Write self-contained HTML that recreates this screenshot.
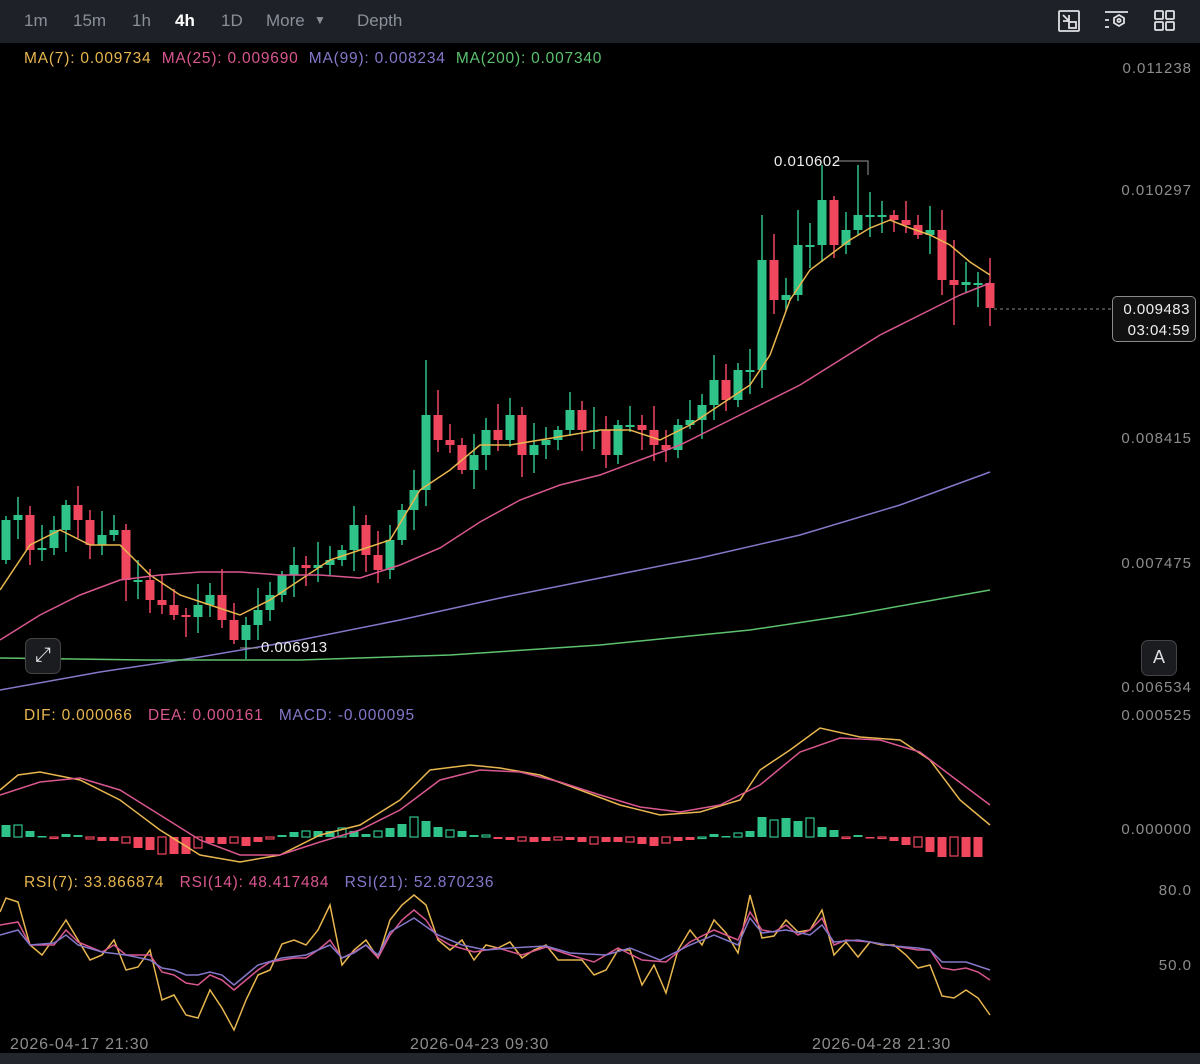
<!DOCTYPE html>
<html><head><meta charset="utf-8"><style>
html,body{margin:0;padding:0;background:#000;width:1200px;height:1064px;overflow:hidden;font-family:"Liberation Sans",sans-serif}
.top{position:absolute;left:0;top:0;width:1200px;height:43px;background:#1e2128}
.top span{position:absolute;top:11px;font-size:17px;color:#8a8f98}
.lab{position:absolute;font-size:15.5px;letter-spacing:0.8px;white-space:pre}
.ax{position:absolute;right:8px;font-size:15px;letter-spacing:1px;color:#8d8d8d}
svg{position:absolute;left:0;top:0}
</style></head><body>
<div class="top">
<span style="left:24px">1m</span><span style="left:73px">15m</span><span style="left:132px">1h</span>
<span style="left:175px;color:#fff;font-weight:bold">4h</span><span style="left:221px">1D</span>
<span style="left:266px">More</span><span style="left:314px;top:13px;font-size:12px">▼</span><span style="left:357px">Depth</span>
<svg width="1200" height="43" style="position:absolute;left:0;top:0" fill="none" stroke="#dfe1e5" stroke-width="1.8">
<rect x="1059" y="11" width="20" height="20" rx="1"/><path d="M1063 15l6 6M1063 21h6v-6" /><rect x="1069" y="22" width="7" height="6"/>
<path d="M1105 12h23M1105 20h4M1105 27h4"/><path d="M1119 15l5 3v5l-5 3-5-3v-5z"/><circle cx="1119" cy="20.5" r="1.6"/>
<rect x="1155" y="11" width="8" height="8" rx="1"/><rect x="1166" y="11" width="8" height="8" rx="1"/><rect x="1155" y="22" width="8" height="8" rx="1"/><rect x="1166" y="22" width="8" height="8" rx="1"/>
</svg>
</div>
<svg id="c" width="1200" height="1064"></svg>
<div class="lab" style="left:24px;top:50px"><span style="color:#e8b64e">MA(7): 0.009734</span>  <span style="color:#d9578f">MA(25): 0.009690</span>  <span style="color:#8577c9">MA(99): 0.008234</span>  <span style="color:#5cc26f">MA(200): 0.007340</span></div>
<div class="lab" style="left:24px;top:707px"><span style="color:#e8b64e">DIF: 0.000066</span>   <span style="color:#d9578f">DEA: 0.000161</span>   <span style="color:#8577c9">MACD: -0.000095</span></div>
<div class="lab" style="left:24px;top:874px"><span style="color:#e8b64e">RSI(7): 33.866874</span>   <span style="color:#d9578f">RSI(14): 48.417484</span>   <span style="color:#8577c9">RSI(21): 52.870236</span></div>
<div class="ax" style="top:60px">0.011238</div>
<div class="ax" style="top:182px">0.010297</div>
<div class="ax" style="top:430px">0.008415</div>
<div class="ax" style="top:555px">0.007475</div>
<div class="ax" style="top:679px">0.006534</div>
<div class="ax" style="top:707px">0.000525</div>
<div class="ax" style="top:821px">0.000000</div>
<div class="ax" style="top:882px">80.0</div>
<div class="ax" style="top:957px">50.0</div>
<div style="position:absolute;left:1112px;top:296px;width:84px;height:46px;border:1px solid #8a8a8a;border-radius:5px;background:#111;color:#eee;font-size:15px;letter-spacing:0.5px;text-align:right;line-height:21px;box-sizing:border-box;padding:2px 5px">0.009483<br>03:04:59</div>
<div style="position:absolute;left:774px;top:153px;color:#eee;font-size:15px;letter-spacing:0.5px">0.010602</div>
<div style="position:absolute;left:261px;top:639px;color:#eee;font-size:15px;letter-spacing:0.5px">0.006913</div>
<div style="position:absolute;left:25px;top:638px;width:34px;height:34px;border:1px solid #444;border-radius:7px;background:#1a1c20;color:#ddd;font-size:20px;text-align:center;line-height:32px">⤢</div>
<div style="position:absolute;left:1141px;top:640px;width:34px;height:34px;border:1px solid #444;border-radius:7px;background:#1a1c20;color:#ddd;font-size:18px;text-align:center;line-height:33px">A</div>
<div class="lab" style="left:10px;top:1036px;color:#8d8d8d;font-size:16px">2026-04-17 21:30</div>
<div class="lab" style="left:410px;top:1036px;color:#8d8d8d;font-size:16px">2026-04-23 09:30</div>
<div class="lab" style="left:812px;top:1036px;color:#8d8d8d;font-size:16px">2026-04-28 21:30</div>
<div style="position:absolute;left:0;top:1053px;width:1200px;height:11px;background:#23262c"></div>
<script>
var s='',G='#2fc38a',R='#f0475f';
var cl=[520,515,550,548,530,505,520,545,535,530,580,580,600,605,615,617,605,595,620,640,625,610,595,575,565,568,565,560,550,525,555,570,540,510,490,415,440,445,470,455,430,440,415,455,445,440,430,410,430,430,455,425,425,430,445,450,425,420,405,380,400,370,370,260,300,295,245,245,200,245,230,215,215,215,220,225,235,230,280,285,282,283,308];
for(var i=0;i<cl.length;i++){var x=6+i*12,c=cl[i],o=(i==0?560:cl[i-1]);if(Math.abs(c-o)<2)o=c+2;
var col=c<o?G:R,t=Math.min(c,o),b=Math.max(c,o),h=4+((i*37)%23),l=4+((i*53)%19);
if(i==35)h=55;if(i==68)h=35;if(i==71)h=50;if(i==79)h=40;if(i==66)h=35;if(i==63)h=45;if(i==78)h=20;if(i==79)l=40;
s+='<line x1="'+x+'" x2="'+x+'" y1="'+(t-h)+'" y2="'+(b+l)+'" stroke="'+col+'" stroke-width="1.5"/><rect x="'+(x-4.5)+'" y="'+t+'" width="9" height="'+(b-t)+'" fill="'+col+'"/>';}
function pl(p,c,w){s+='<polyline fill="none" stroke="'+c+'" stroke-width="'+(w||1.5)+'" points="'+p+'"/>';}
pl('0,590 30,545 60,530 90,545 120,545 150,575 180,595 210,605 240,615 270,600 300,580 330,560 360,550 390,540 420,490 450,470 480,445 510,445 540,440 570,435 600,430 630,430 660,440 690,425 720,405 750,385 770,355 790,300 810,270 830,255 850,240 870,228 890,220 910,228 930,235 950,245 970,262 990,275','#e8b64e');
pl('0,640 40,615 80,595 120,580 160,575 200,572 240,572 280,575 320,575 360,578 400,565 440,548 480,522 520,500 560,485 600,475 640,460 680,445 720,425 760,405 800,385 840,360 880,335 920,315 960,295 990,283','#d9578f');
pl('0,690 100,672 200,657 300,640 400,620 500,598 600,578 700,558 800,535 900,505 990,472','#8577c9');
pl('0,658 150,660 300,660 450,655 600,645 750,630 850,615 990,590','#5cc26f');
s+='<line x1="994" x2="1112" y1="309" y2="309" stroke="#888" stroke-dasharray="3,3"/>';
s+='<polyline points="835,161 868,161 868,175" fill="none" stroke="#999"/><polyline points="240,648 258,648" fill="none" stroke="#999"/>';
var hv=[12,12,6,1,-1,3,2,-2,-4,-4,-6,-11,-13,-17,-17,-17,-11,-6,-7,-6,-9,-5,-2,2,5,6,6,6,9,6,3,6,9,13,20,16,10,7,6,2,2,-2,-3,-4,-5,-4,-3,-3,-5,-7,-5,-5,-5,-7,-9,-6,-4,-3,0,3,1,4,6,20,17,19,16,19,10,7,-1,2,-1,-1,-4,-8,-10,-15,-20,-19,-20,-20];
for(i=0;i<hv.length;i++){var x=6+i*12,v=hv[i],col=v>=0?G:R,hol=(i%3==1);
var y=v>=0?837-v:837,hh=Math.max(Math.abs(v),1.5);
s+=hol?'<rect x="'+(x-4)+'" y="'+y+'" width="8" height="'+hh+'" fill="none" stroke="'+col+'" stroke-width="1.2"/>':'<rect x="'+(x-4.5)+'" y="'+y+'" width="9" height="'+hh+'" fill="'+col+'"/>';}
pl('0,790 18,775 40,772 80,780 120,800 160,830 200,855 240,862 280,855 320,835 360,825 400,800 430,770 470,765 500,768 540,775 580,790 620,805 660,815 700,812 740,800 760,770 790,750 820,728 860,737 900,740 930,760 960,800 990,825','#e8b64e');
pl('0,795 40,782 80,778 120,790 160,815 200,840 240,855 280,855 320,842 360,830 400,810 440,780 480,770 520,772 560,782 600,795 640,807 680,812 720,805 760,785 800,752 840,738 880,740 920,752 950,775 990,805','#d9578f');
pl('0,912 6,898 18,902 30,945 42,955 54,938 66,920 78,940 90,960 102,955 114,940 126,970 138,967 150,950 162,1000 174,995 186,1015 198,1018 210,990 222,1008 234,1030 246,1000 258,975 270,970 282,944 294,940 306,945 318,930 330,905 342,965 354,950 366,940 378,958 390,920 402,905 414,895 426,905 438,940 450,950 462,940 474,960 486,945 498,948 510,942 522,958 534,950 546,945 558,960 570,960 582,960 594,975 606,970 618,950 630,950 642,985 654,965 666,993 678,950 690,930 702,945 714,920 726,933 738,953 750,895 762,938 774,936 786,920 798,932 810,930 822,910 834,955 846,942 858,957 870,942 882,945 894,945 906,955 918,968 930,965 942,996 954,998 966,990 978,998 990,1015','#e8b64e');
pl('0,925 18,922 30,945 54,945 66,930 78,942 102,952 114,945 126,955 150,955 162,972 174,975 186,983 198,985 210,975 222,980 234,990 246,980 258,970 270,962 294,958 306,958 318,950 330,940 342,958 354,952 366,945 378,958 390,935 402,920 414,910 426,920 438,938 450,945 474,952 498,948 522,955 546,947 570,955 594,962 618,948 642,960 666,962 690,942 714,930 738,940 750,912 762,930 774,932 786,925 798,935 810,930 822,918 834,945 846,940 870,942 894,946 918,950 930,950 942,968 954,970 966,968 978,972 990,980','#d9578f');
pl('0,935 18,930 30,945 54,943 66,935 78,945 102,952 126,955 150,960 162,968 174,970 186,975 198,975 210,972 222,975 234,985 246,975 258,965 282,958 306,955 330,945 342,958 354,953 366,945 378,955 390,932 414,918 438,935 462,945 486,950 510,948 546,946 570,953 606,955 630,948 660,960 690,945 714,935 738,945 750,918 762,933 786,930 810,935 822,925 834,942 858,940 894,946 918,948 930,950 942,962 966,962 978,966 990,970','#8577c9');
document.getElementById('c').innerHTML=s;
</script>
</body></html>
